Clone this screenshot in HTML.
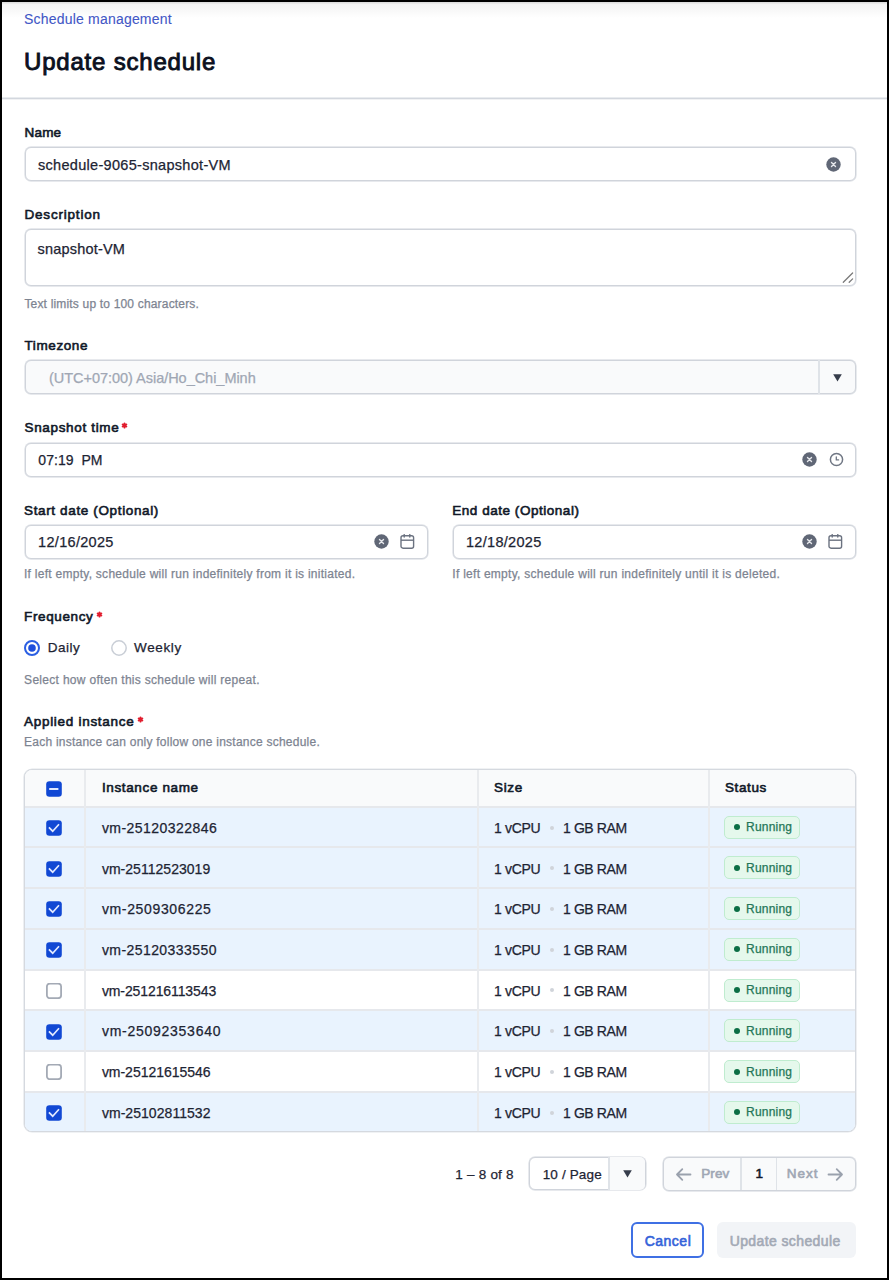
<!DOCTYPE html>
<html><head><meta charset="utf-8"><title>Update schedule</title>
<style>
html,body{margin:0;padding:0;}
body{width:889px;height:1280px;position:relative;overflow:hidden;background:#000;font-family:"Liberation Sans",sans-serif;}
#page{position:absolute;left:2px;top:2px;width:885px;height:1276px;background:#fff;}
.t{position:absolute;white-space:nowrap;}
.t.n{-webkit-text-stroke:0.25px currentColor;}
.t.sb{font-weight:400 !important;-webkit-text-stroke:0.6px currentColor;}
.r{position:absolute;}
</style></head><body>
<div id="page"></div>
<div class="r" style="left:2px;top:2px;width:885px;height:16px;background:linear-gradient(#d9d9d9 0px,#f4f4f4 2.5px,#f8f8f8 8px,#ffffff 16px)"></div>
<div class="t n" style="left:24px;top:12.45px;font-size:14px;line-height:14px;font-weight:400;color:#4257c6;letter-spacing:0.2px;-webkit-text-stroke:0.1px #4257c6;">Schedule management</div>
<div class="t sb" style="left:24px;top:49.68px;font-size:24px;line-height:24px;font-weight:600;color:#0b1020;letter-spacing:0.8px;-webkit-text-stroke:0.9px #0b1020;">Update schedule</div>
<div class="r" style="left:2px;top:97px;width:885px;height:3px;background:linear-gradient(#e9ecef 0,#e9ecef 1px,#d3d7de 1px,#d3d7de 2px,#f1f2f4 2px,#f1f2f4 3px)"></div>
<div class="t sb" style="left:24.5px;top:125.57px;font-size:13.5px;line-height:13.5px;font-weight:600;color:#101828;letter-spacing:0.2px;">Name</div>
<div class="r" style="left:24.5px;top:146.5px;width:831.0px;height:34.5px;border:1px solid #d0d4db;box-shadow:0 0 0 0.7px #dfe2e7;border-radius:6px;box-sizing:border-box;background:#fff"></div>
<div class="t n" style="left:38px;top:157.93px;font-size:14.5px;line-height:14.5px;font-weight:400;color:#1d2433;letter-spacing:0.3px;">schedule-9065-snapshot-VM</div>
<svg class="r" style="left:825.5px;top:156.5px" width="15" height="15" viewBox="0 0 15 15"><circle cx="7.5" cy="7.5" r="7.2" fill="#606776"/><path d="M5.5 5.5L9.5 9.5M9.5 5.5L5.5 9.5" stroke="#e6e8ec" stroke-width="1.4" stroke-linecap="round"/></svg>
<div class="t sb" style="left:24.5px;top:208.37px;font-size:13.5px;line-height:13.5px;font-weight:600;color:#101828;letter-spacing:0.8px;">Description</div>
<div class="r" style="left:24.5px;top:229px;width:831.0px;height:56.5px;border:1px solid #d0d4db;box-shadow:0 0 0 0.7px #dfe2e7;border-radius:6px;box-sizing:border-box;background:#fff"></div>
<div class="t n" style="left:37.5px;top:241.73px;font-size:14.5px;line-height:14.5px;font-weight:400;color:#1d2433;letter-spacing:0.2px;">snapshot-VM</div>
<svg class="r" style="left:840px;top:270px" width="16" height="16" viewBox="0 0 16 16" stroke="#7a7a7a" stroke-width="1.3" stroke-linecap="round"><path d="M3.3 12.2L12.6 3M9.2 12.2L12.6 8.9"/></svg>
<div class="t n" style="left:24.4px;top:298.24px;font-size:12px;line-height:12px;font-weight:400;color:#7d8491;letter-spacing:0.18px;">Text limits up to 100 characters.</div>
<div class="t sb" style="left:24.5px;top:339.07px;font-size:13.5px;line-height:13.5px;font-weight:600;color:#101828;letter-spacing:0.6px;">Timezone</div>
<div class="r" style="left:24.5px;top:359.5px;width:831.0px;height:34.5px;border:1px solid #d0d4db;box-shadow:0 0 0 0.7px #dfe2e7;border-radius:6px;box-sizing:border-box;background:#f9fafb"></div>
<div class="r" style="left:818px;top:360px;width:1.5px;height:33.5px;background:#dfe3e8"></div>
<div class="t n" style="left:49px;top:370.73px;font-size:14.5px;line-height:14.5px;font-weight:400;color:#a0a7b4;letter-spacing:-0.03px;">(UTC+07:00) Asia/Ho_Chi_Minh</div>
<svg class="r" style="left:833px;top:373.5px" width="9" height="8" viewBox="0 0 9 8"><path d="M0.2 0.3H8.8L4.5 7.6Z" fill="#363d4b"/></svg>
<div class="t sb" style="left:24.5px;top:421.17px;font-size:13.5px;line-height:13.5px;font-weight:600;color:#101828;letter-spacing:0.66px;">Snapshot time</div>
<svg class="r" style="left:121.00px;top:421.80px" width="7" height="7" viewBox="0 0 7 7" stroke="#e11d2e" stroke-width="1.8" stroke-linecap="round"><path d="M3.5 1.3V5.7M1.6 2.4L5.4 4.6M5.4 2.4L1.6 4.6"/></svg>
<div class="r" style="left:24.5px;top:442.5px;width:831.0px;height:34.0px;border:1px solid #d0d4db;box-shadow:0 0 0 0.7px #dfe2e7;border-radius:6px;box-sizing:border-box;background:#fff"></div>
<div class="t n" style="left:38.3px;top:452.75px;font-size:14px;line-height:14px;font-weight:400;color:#1d2433;letter-spacing:0.05px;">07:19&nbsp; PM</div>
<svg class="r" style="left:802.0px;top:451.8px" width="15" height="15" viewBox="0 0 15 15"><circle cx="7.5" cy="7.5" r="7.2" fill="#606776"/><path d="M5.5 5.5L9.5 9.5M9.5 5.5L5.5 9.5" stroke="#e6e8ec" stroke-width="1.4" stroke-linecap="round"/></svg>
<svg class="r" style="left:828.7px;top:452.1px" width="15" height="15" viewBox="0 0 15 15" fill="none" stroke="#707784" stroke-width="1.5"><circle cx="7.5" cy="7.5" r="6.1"/><path d="M7.3 4.9V7.9H9.6" stroke-width="1.3" stroke-linecap="round"/></svg>
<div class="t sb" style="left:24px;top:503.87px;font-size:13.5px;line-height:13.5px;font-weight:600;color:#101828;letter-spacing:0.64px;">Start date (Optional)</div>
<div class="t sb" style="left:452.3px;top:503.87px;font-size:13.5px;line-height:13.5px;font-weight:600;color:#101828;letter-spacing:0.53px;">End date (Optional)</div>
<div class="r" style="left:24.5px;top:524.5px;width:403.0px;height:34.0px;border:1px solid #d0d4db;box-shadow:0 0 0 0.7px #dfe2e7;border-radius:6px;box-sizing:border-box;background:#fff"></div>
<div class="r" style="left:452.5px;top:524.5px;width:403.0px;height:34.0px;border:1px solid #d0d4db;box-shadow:0 0 0 0.7px #dfe2e7;border-radius:6px;box-sizing:border-box;background:#fff"></div>
<div class="t n" style="left:38.1px;top:535.43px;font-size:14.5px;line-height:14.5px;font-weight:400;color:#1d2433;letter-spacing:0.3px;">12/16/2025</div>
<div class="t n" style="left:466px;top:535.43px;font-size:14.5px;line-height:14.5px;font-weight:400;color:#1d2433;letter-spacing:0.3px;">12/18/2025</div>
<svg class="r" style="left:374.2px;top:534.3px" width="15" height="15" viewBox="0 0 15 15"><circle cx="7.5" cy="7.5" r="7.2" fill="#606776"/><path d="M5.5 5.5L9.5 9.5M9.5 5.5L5.5 9.5" stroke="#e6e8ec" stroke-width="1.4" stroke-linecap="round"/></svg>
<svg class="r" style="left:399.5px;top:534.3px" width="15" height="15" viewBox="0 0 15 15" fill="none" stroke="#6b7280" stroke-width="1.4"><rect x="1" y="1.8" width="12.6" height="12.4" rx="2"/><path d="M1 6.2H13.6"/><path d="M4.2 0.6V3M9.8 0.6V3" stroke-linecap="round"/></svg>
<svg class="r" style="left:802.0px;top:534.3px" width="15" height="15" viewBox="0 0 15 15"><circle cx="7.5" cy="7.5" r="7.2" fill="#606776"/><path d="M5.5 5.5L9.5 9.5M9.5 5.5L5.5 9.5" stroke="#e6e8ec" stroke-width="1.4" stroke-linecap="round"/></svg>
<svg class="r" style="left:828px;top:534.3px" width="15" height="15" viewBox="0 0 15 15" fill="none" stroke="#6b7280" stroke-width="1.4"><rect x="1" y="1.8" width="12.6" height="12.4" rx="2"/><path d="M1 6.2H13.6"/><path d="M4.2 0.6V3M9.8 0.6V3" stroke-linecap="round"/></svg>
<div class="t n" style="left:24px;top:567.84px;font-size:12px;line-height:12px;font-weight:400;color:#7d8491;letter-spacing:0.27px;">If left empty, schedule will run indefinitely from it is initiated.</div>
<div class="t n" style="left:452.3px;top:567.84px;font-size:12px;line-height:12px;font-weight:400;color:#7d8491;letter-spacing:0.28px;">If left empty, schedule will run indefinitely until it is deleted.</div>
<div class="t sb" style="left:24.1px;top:609.87px;font-size:13.5px;line-height:13.5px;font-weight:600;color:#101828;letter-spacing:0.62px;">Frequency</div>
<svg class="r" style="left:95.70px;top:610.50px" width="7" height="7" viewBox="0 0 7 7" stroke="#e11d2e" stroke-width="1.8" stroke-linecap="round"><path d="M3.5 1.3V5.7M1.6 2.4L5.4 4.6M5.4 2.4L1.6 4.6"/></svg>
<svg class="r" style="left:24px;top:639.6px" width="16" height="16" viewBox="0 0 16 16"><circle cx="8" cy="8" r="7" fill="#fff" stroke="#2b5fe3" stroke-width="2"/><circle cx="8" cy="8" r="3.8" fill="#1f4fdc"/></svg>
<svg class="r" style="left:110.6px;top:639.6px" width="16" height="16" viewBox="0 0 16 16"><circle cx="8" cy="8" r="7.2" fill="#fff" stroke="#c9ced6" stroke-width="1.5"/></svg>
<div class="t n" style="left:47.8px;top:641.37px;font-size:13.5px;line-height:13.5px;font-weight:400;color:#1d2433;letter-spacing:0.5px;">Daily</div>
<div class="t n" style="left:134px;top:641.37px;font-size:13.5px;line-height:13.5px;font-weight:400;color:#1d2433;letter-spacing:0.64px;">Weekly</div>
<div class="t n" style="left:24.1px;top:674.14px;font-size:12px;line-height:12px;font-weight:400;color:#7d8491;letter-spacing:0.3px;">Select how often this schedule will repeat.</div>
<div class="t sb" style="left:24px;top:715.17px;font-size:13.5px;line-height:13.5px;font-weight:600;color:#101828;letter-spacing:0.71px;">Applied instance</div>
<svg class="r" style="left:136.50px;top:715.80px" width="7" height="7" viewBox="0 0 7 7" stroke="#e11d2e" stroke-width="1.8" stroke-linecap="round"><path d="M3.5 1.3V5.7M1.6 2.4L5.4 4.6M5.4 2.4L1.6 4.6"/></svg>
<div class="t n" style="left:24px;top:735.54px;font-size:12px;line-height:12px;font-weight:400;color:#7d8491;letter-spacing:0.24px;">Each instance can only follow one instance schedule.</div>
<div class="r" style="left:24px;top:769px;width:832px;height:363px;border:1px solid #d5d9df;box-shadow:0 0 0 0.6px #e2e5e9;border-radius:8px;box-sizing:border-box;overflow:hidden;background:#fff">
<div class="r" style="left:0.00px;top:0.00px;width:830.00px;height:36.20px;background:#f9fafb"></div>
<div class="r" style="left:0.00px;top:37.20px;width:830.00px;height:39.71px;background:#e9f3fe"></div>
<div class="r" style="left:0.00px;top:35.70px;width:830.00px;height:2.00px;background:#e6e8ec"></div>
<div class="r" style="left:0.00px;top:77.91px;width:830.00px;height:39.71px;background:#e9f3fe"></div>
<div class="r" style="left:0.00px;top:76.41px;width:830.00px;height:2.00px;background:#e6e8ec"></div>
<div class="r" style="left:0.00px;top:118.62px;width:830.00px;height:39.71px;background:#e9f3fe"></div>
<div class="r" style="left:0.00px;top:117.12px;width:830.00px;height:2.00px;background:#e6e8ec"></div>
<div class="r" style="left:0.00px;top:159.33px;width:830.00px;height:39.71px;background:#e9f3fe"></div>
<div class="r" style="left:0.00px;top:157.83px;width:830.00px;height:2.00px;background:#e6e8ec"></div>
<div class="r" style="left:0.00px;top:200.04px;width:830.00px;height:39.71px;background:#ffffff"></div>
<div class="r" style="left:0.00px;top:198.54px;width:830.00px;height:2.00px;background:#e6e8ec"></div>
<div class="r" style="left:0.00px;top:240.75px;width:830.00px;height:39.71px;background:#e9f3fe"></div>
<div class="r" style="left:0.00px;top:239.25px;width:830.00px;height:2.00px;background:#e6e8ec"></div>
<div class="r" style="left:0.00px;top:281.46px;width:830.00px;height:39.71px;background:#ffffff"></div>
<div class="r" style="left:0.00px;top:279.96px;width:830.00px;height:2.00px;background:#e6e8ec"></div>
<div class="r" style="left:0.00px;top:322.17px;width:830.00px;height:38.83px;background:#e9f3fe"></div>
<div class="r" style="left:0.00px;top:320.67px;width:830.00px;height:2.00px;background:#e6e8ec"></div>
<div class="r" style="left:59.10px;top:0.00px;width:2.00px;height:361.00px;background:#e9ebee"></div>
<div class="r" style="left:451.70px;top:0.00px;width:2.00px;height:361.00px;background:#e9ebee"></div>
<div class="r" style="left:682.50px;top:0.00px;width:2.00px;height:361.00px;background:#e9ebee"></div>
</div>
<svg class="r" style="left:46px;top:781px" width="16" height="16" viewBox="0 0 16 16"><rect x="0.2" y="0.2" width="15.6" height="15.6" rx="3.2" fill="#1148d4"/><path d="M3.2 8H12.4" stroke="#dfe7ff" stroke-width="2"/></svg>
<div class="t sb" style="left:101.9px;top:781.47px;font-size:13.5px;line-height:13.5px;font-weight:600;color:#101828;letter-spacing:0.64px;">Instance name</div>
<div class="t sb" style="left:494px;top:781.47px;font-size:13.5px;line-height:13.5px;font-weight:600;color:#101828;letter-spacing:0.67px;">Size</div>
<div class="t sb" style="left:725px;top:781.47px;font-size:13.5px;line-height:13.5px;font-weight:600;color:#101828;letter-spacing:0.6px;">Status</div>
<svg class="r" style="left:46px;top:820.0550000000001px" width="16" height="16" viewBox="0 0 16 16"><rect x="0.2" y="0.2" width="15.6" height="15.6" rx="3.2" fill="#1148d4"/><path d="M2.9 7.3L6.7 11.2L13 4.3" fill="none" stroke="#e2e9ff" stroke-width="1.7"/></svg>
<div class="t n" style="left:101.9px;top:820.80px;font-size:14px;line-height:14px;font-weight:400;color:#1d2433;letter-spacing:0.46px;">vm-25120322846</div>
<div class="t n" style="left:494px;top:820.80px;font-size:14px;line-height:14px;font-weight:400;color:#1d2433;letter-spacing:-0.3px;">1 vCPU</div>
<div class="r" style="left:549.6px;top:825.5550000000001px;width:4.0px;height:4.0px;background:#d0d4da;border-radius:50%"></div>
<div class="t n" style="left:563px;top:820.80px;font-size:14px;line-height:14px;font-weight:400;color:#1d2433;letter-spacing:-0.4px;">1 GB RAM</div>
<div class="r" style="left:724px;top:815.76px;width:76px;height:23px;background:#e5f8ec;border:1px solid #bfeccf;border-radius:5px;box-sizing:border-box"></div>
<div class="r" style="left:734.2px;top:824.2550000000001px;width:6.0px;height:6.0px;background:#0b6e45;border-radius:50%"></div>
<div class="t n" style="left:746px;top:821.30px;font-size:12px;line-height:12px;font-weight:400;color:#247657;letter-spacing:0.22px;">Running</div>
<svg class="r" style="left:46px;top:860.7650000000001px" width="16" height="16" viewBox="0 0 16 16"><rect x="0.2" y="0.2" width="15.6" height="15.6" rx="3.2" fill="#1148d4"/><path d="M2.9 7.3L6.7 11.2L13 4.3" fill="none" stroke="#e2e9ff" stroke-width="1.7"/></svg>
<div class="t n" style="left:101.9px;top:861.51px;font-size:14px;line-height:14px;font-weight:400;color:#1d2433;letter-spacing:0.03px;">vm-25112523019</div>
<div class="t n" style="left:494px;top:861.51px;font-size:14px;line-height:14px;font-weight:400;color:#1d2433;letter-spacing:-0.3px;">1 vCPU</div>
<div class="r" style="left:549.6px;top:866.2650000000001px;width:4.0px;height:4.0px;background:#d0d4da;border-radius:50%"></div>
<div class="t n" style="left:563px;top:861.51px;font-size:14px;line-height:14px;font-weight:400;color:#1d2433;letter-spacing:-0.4px;">1 GB RAM</div>
<div class="r" style="left:724px;top:856.47px;width:76px;height:23px;background:#e5f8ec;border:1px solid #bfeccf;border-radius:5px;box-sizing:border-box"></div>
<div class="r" style="left:734.2px;top:864.9650000000001px;width:6.0px;height:6.0px;background:#0b6e45;border-radius:50%"></div>
<div class="t n" style="left:746px;top:862.01px;font-size:12px;line-height:12px;font-weight:400;color:#247657;letter-spacing:0.22px;">Running</div>
<svg class="r" style="left:46px;top:901.475px" width="16" height="16" viewBox="0 0 16 16"><rect x="0.2" y="0.2" width="15.6" height="15.6" rx="3.2" fill="#1148d4"/><path d="M2.9 7.3L6.7 11.2L13 4.3" fill="none" stroke="#e2e9ff" stroke-width="1.7"/></svg>
<div class="t n" style="left:101.9px;top:902.22px;font-size:14px;line-height:14px;font-weight:400;color:#1d2433;letter-spacing:0.65px;">vm-2509306225</div>
<div class="t n" style="left:494px;top:902.22px;font-size:14px;line-height:14px;font-weight:400;color:#1d2433;letter-spacing:-0.3px;">1 vCPU</div>
<div class="r" style="left:549.6px;top:906.975px;width:4.0px;height:4.0px;background:#d0d4da;border-radius:50%"></div>
<div class="t n" style="left:563px;top:902.22px;font-size:14px;line-height:14px;font-weight:400;color:#1d2433;letter-spacing:-0.4px;">1 GB RAM</div>
<div class="r" style="left:724px;top:897.18px;width:76px;height:23px;background:#e5f8ec;border:1px solid #bfeccf;border-radius:5px;box-sizing:border-box"></div>
<div class="r" style="left:734.2px;top:905.6750000000001px;width:6.0px;height:6.0px;background:#0b6e45;border-radius:50%"></div>
<div class="t n" style="left:746px;top:902.72px;font-size:12px;line-height:12px;font-weight:400;color:#247657;letter-spacing:0.22px;">Running</div>
<svg class="r" style="left:46px;top:942.1850000000001px" width="16" height="16" viewBox="0 0 16 16"><rect x="0.2" y="0.2" width="15.6" height="15.6" rx="3.2" fill="#1148d4"/><path d="M2.9 7.3L6.7 11.2L13 4.3" fill="none" stroke="#e2e9ff" stroke-width="1.7"/></svg>
<div class="t n" style="left:101.9px;top:942.93px;font-size:14px;line-height:14px;font-weight:400;color:#1d2433;letter-spacing:0.43px;">vm-25120333550</div>
<div class="t n" style="left:494px;top:942.93px;font-size:14px;line-height:14px;font-weight:400;color:#1d2433;letter-spacing:-0.3px;">1 vCPU</div>
<div class="r" style="left:549.6px;top:947.6850000000001px;width:4.0px;height:4.0px;background:#d0d4da;border-radius:50%"></div>
<div class="t n" style="left:563px;top:942.93px;font-size:14px;line-height:14px;font-weight:400;color:#1d2433;letter-spacing:-0.4px;">1 GB RAM</div>
<div class="r" style="left:724px;top:937.89px;width:76px;height:23px;background:#e5f8ec;border:1px solid #bfeccf;border-radius:5px;box-sizing:border-box"></div>
<div class="r" style="left:734.2px;top:946.3850000000001px;width:6.0px;height:6.0px;background:#0b6e45;border-radius:50%"></div>
<div class="t n" style="left:746px;top:943.43px;font-size:12px;line-height:12px;font-weight:400;color:#247657;letter-spacing:0.22px;">Running</div>
<svg class="r" style="left:46px;top:982.8950000000001px" width="16" height="16" viewBox="0 0 16 16"><rect x="0.9" y="0.6" width="14.2" height="14.6" rx="3" fill="#fff" stroke="#a4aab5" stroke-width="1.8"/></svg>
<div class="t n" style="left:101.9px;top:983.64px;font-size:14px;line-height:14px;font-weight:400;color:#1d2433;letter-spacing:-0.1px;">vm-251216113543</div>
<div class="t n" style="left:494px;top:983.64px;font-size:14px;line-height:14px;font-weight:400;color:#1d2433;letter-spacing:-0.3px;">1 vCPU</div>
<div class="r" style="left:549.6px;top:988.3950000000001px;width:4.0px;height:4.0px;background:#d0d4da;border-radius:50%"></div>
<div class="t n" style="left:563px;top:983.64px;font-size:14px;line-height:14px;font-weight:400;color:#1d2433;letter-spacing:-0.4px;">1 GB RAM</div>
<div class="r" style="left:724px;top:978.60px;width:76px;height:23px;background:#e5f8ec;border:1px solid #bfeccf;border-radius:5px;box-sizing:border-box"></div>
<div class="r" style="left:734.2px;top:987.0950000000001px;width:6.0px;height:6.0px;background:#0b6e45;border-radius:50%"></div>
<div class="t n" style="left:746px;top:984.14px;font-size:12px;line-height:12px;font-weight:400;color:#247657;letter-spacing:0.22px;">Running</div>
<svg class="r" style="left:46px;top:1023.605px" width="16" height="16" viewBox="0 0 16 16"><rect x="0.2" y="0.2" width="15.6" height="15.6" rx="3.2" fill="#1148d4"/><path d="M2.9 7.3L6.7 11.2L13 4.3" fill="none" stroke="#e2e9ff" stroke-width="1.7"/></svg>
<div class="t n" style="left:101.9px;top:1024.35px;font-size:14px;line-height:14px;font-weight:400;color:#1d2433;letter-spacing:0.74px;">vm-25092353640</div>
<div class="t n" style="left:494px;top:1024.35px;font-size:14px;line-height:14px;font-weight:400;color:#1d2433;letter-spacing:-0.3px;">1 vCPU</div>
<div class="r" style="left:549.6px;top:1029.105px;width:4.0px;height:4.0px;background:#d0d4da;border-radius:50%"></div>
<div class="t n" style="left:563px;top:1024.35px;font-size:14px;line-height:14px;font-weight:400;color:#1d2433;letter-spacing:-0.4px;">1 GB RAM</div>
<div class="r" style="left:724px;top:1019.31px;width:76px;height:23px;background:#e5f8ec;border:1px solid #bfeccf;border-radius:5px;box-sizing:border-box"></div>
<div class="r" style="left:734.2px;top:1027.805px;width:6.0px;height:6.0px;background:#0b6e45;border-radius:50%"></div>
<div class="t n" style="left:746px;top:1024.85px;font-size:12px;line-height:12px;font-weight:400;color:#247657;letter-spacing:0.22px;">Running</div>
<svg class="r" style="left:46px;top:1064.315px" width="16" height="16" viewBox="0 0 16 16"><rect x="0.9" y="0.6" width="14.2" height="14.6" rx="3" fill="#fff" stroke="#a4aab5" stroke-width="1.8"/></svg>
<div class="t n" style="left:101.9px;top:1065.06px;font-size:14px;line-height:14px;font-weight:400;color:#1d2433;letter-spacing:-0.03px;">vm-25121615546</div>
<div class="t n" style="left:494px;top:1065.06px;font-size:14px;line-height:14px;font-weight:400;color:#1d2433;letter-spacing:-0.3px;">1 vCPU</div>
<div class="r" style="left:549.6px;top:1069.815px;width:4.0px;height:4.0px;background:#d0d4da;border-radius:50%"></div>
<div class="t n" style="left:563px;top:1065.06px;font-size:14px;line-height:14px;font-weight:400;color:#1d2433;letter-spacing:-0.4px;">1 GB RAM</div>
<div class="r" style="left:724px;top:1060.02px;width:76px;height:23px;background:#e5f8ec;border:1px solid #bfeccf;border-radius:5px;box-sizing:border-box"></div>
<div class="r" style="left:734.2px;top:1068.515px;width:6.0px;height:6.0px;background:#0b6e45;border-radius:50%"></div>
<div class="t n" style="left:746px;top:1065.56px;font-size:12px;line-height:12px;font-weight:400;color:#247657;letter-spacing:0.22px;">Running</div>
<svg class="r" style="left:46px;top:1105.025px" width="16" height="16" viewBox="0 0 16 16"><rect x="0.2" y="0.2" width="15.6" height="15.6" rx="3.2" fill="#1148d4"/><path d="M2.9 7.3L6.7 11.2L13 4.3" fill="none" stroke="#e2e9ff" stroke-width="1.7"/></svg>
<div class="t n" style="left:101.9px;top:1105.77px;font-size:14px;line-height:14px;font-weight:400;color:#1d2433;letter-spacing:0.05px;">vm-25102811532</div>
<div class="t n" style="left:494px;top:1105.77px;font-size:14px;line-height:14px;font-weight:400;color:#1d2433;letter-spacing:-0.3px;">1 vCPU</div>
<div class="r" style="left:549.6px;top:1110.525px;width:4.0px;height:4.0px;background:#d0d4da;border-radius:50%"></div>
<div class="t n" style="left:563px;top:1105.77px;font-size:14px;line-height:14px;font-weight:400;color:#1d2433;letter-spacing:-0.4px;">1 GB RAM</div>
<div class="r" style="left:724px;top:1100.73px;width:76px;height:23px;background:#e5f8ec;border:1px solid #bfeccf;border-radius:5px;box-sizing:border-box"></div>
<div class="r" style="left:734.2px;top:1109.2250000000001px;width:6.0px;height:6.0px;background:#0b6e45;border-radius:50%"></div>
<div class="t n" style="left:746px;top:1106.27px;font-size:12px;line-height:12px;font-weight:400;color:#247657;letter-spacing:0.22px;">Running</div>
<div class="t n" style="left:455.3px;top:1167.77px;font-size:13.5px;line-height:13.5px;font-weight:400;color:#1d2433;letter-spacing:0.22px;">1 – 8 of 8</div>
<div class="r" style="left:528.5px;top:1156.5px;width:117.0px;height:33.5px;border:1px solid #d0d4db;box-shadow:0 0 0 0.7px #dfe2e7;border-radius:6px;box-sizing:border-box;background:#fff"></div>
<div class="r" style="left:609px;top:1157px;width:36px;height:32.5px;background:#f9fafb;border-radius:0 5px 5px 0"></div>
<div class="r" style="left:608px;top:1157px;width:1.5px;height:32.5px;background:#dfe3e8"></div>
<div class="t n" style="left:542.7px;top:1167.77px;font-size:13.5px;line-height:13.5px;font-weight:400;color:#1d2433;letter-spacing:0.15px;">10 / Page</div>
<svg class="r" style="left:623px;top:1170px" width="9" height="8" viewBox="0 0 9 8"><path d="M0.2 0.3H8.8L4.5 7.6Z" fill="#363d4b"/></svg>
<div class="r" style="left:663px;top:1156.5px;width:192.5px;height:34.0px;border:1px solid #d0d4db;box-shadow:0 0 0 0.7px #dfe2e7;border-radius:6px;box-sizing:border-box;background:#f9fafb"></div>
<div class="r" style="left:740px;top:1157.5px;width:1.5px;height:32.5px;background:#dfe3e8"></div>
<div class="r" style="left:775.5px;top:1157.5px;width:1.5px;height:32.5px;background:#dfe3e8"></div>
<svg class="r" style="left:675px;top:1167px" width="17" height="15" viewBox="0 0 17 15" fill="none" stroke="#9aa1ad" stroke-width="1.8" stroke-linecap="round" stroke-linejoin="round"><path d="M15.5 7.5H2M7.3 2.2L2 7.5L7.3 12.8"/></svg>
<div class="t sb" style="left:701.2px;top:1167.47px;font-size:13.5px;line-height:13.5px;font-weight:600;color:#a0a7b4;letter-spacing:0.13px;">Prev</div>
<div class="t sb" style="left:755.5px;top:1167.47px;font-size:13.5px;line-height:13.5px;font-weight:600;color:#101828;">1</div>
<div class="t sb" style="left:786.8px;top:1167.47px;font-size:13.5px;line-height:13.5px;font-weight:600;color:#a0a7b4;letter-spacing:1.0px;">Next</div>
<svg class="r" style="left:826.5px;top:1167px" width="17" height="15" viewBox="0 0 17 15" fill="none" stroke="#9aa1ad" stroke-width="1.8" stroke-linecap="round" stroke-linejoin="round"><path d="M1.5 7.5H15M9.7 2.2L15 7.5L9.7 12.8"/></svg>
<div class="r" style="left:631px;top:1222px;width:72.5px;height:35.5px;border:2px solid #3f70e4;border-radius:6px;box-sizing:border-box;background:#fff"></div>
<div class="t sb" style="left:644.7px;top:1233.85px;font-size:14px;line-height:14px;font-weight:600;color:#3463d9;letter-spacing:0.5px;">Cancel</div>
<div class="r" style="left:716.5px;top:1222px;width:139.5px;height:35.5px;border-radius:6px;background:#f2f4f7"></div>
<div class="t sb" style="left:729.7px;top:1233.85px;font-size:14px;line-height:14px;font-weight:600;color:#a3a9b5;letter-spacing:0.39px;">Update schedule</div>
</body></html>
